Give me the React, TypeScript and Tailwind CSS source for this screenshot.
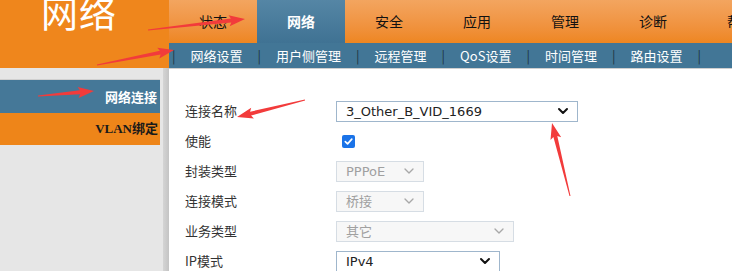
import { ChevronDown } from 'lucide-react';

const cjk = "font-['Noto_Sans_CJK_SC',sans-serif]";

const tabs = ['状态', '网络', '安全', '应用', '管理', '诊断', '帮助'];
const subs = ['网络设置', '用户侧管理', '远程管理', 'QoS设置', '时间管理', '路由设置'];

function arrowPoints(x1: number, y1: number, x2: number, y2: number) {
  const dx = x2 - x1;
  const dy = y2 - y1;
  const len = Math.hypot(dx, dy);
  const ux = dx / len;
  const uy = dy / len;
  const nx = -uy;
  const ny = ux;
  const hl = 14;
  const bx = x2 - ux * hl;
  const by = y2 - uy * hl;
  const p = (x: number, y: number) => `${x.toFixed(1)},${y.toFixed(1)}`;
  return [
    p(x1 + nx * 0.5, y1 + ny * 0.5),
    p(bx + nx * 2, by + ny * 2),
    p(bx + nx * 5.5 - ux * 2, by + ny * 5.5 - uy * 2),
    p(x2, y2),
    p(bx - nx * 5.5 - ux * 2, by - ny * 5.5 - uy * 2),
    p(bx - nx * 2, by - ny * 2),
    p(x1 - nx * 0.5, y1 - ny * 0.5),
  ].join(' ');
}

const arrows: [number, number, number, number][] = [
  [148, 30, 245, 19],
  [97, 65, 174, 50],
  [38, 96, 94, 91],
  [305, 100, 237, 117],
  [570, 196, 552, 123],
];

function Select({ value, width, disabled, strong }: { value: string; width: string; disabled?: boolean; strong?: boolean }) {
  return (
    <div
      className={`flex h-[21px] items-center justify-between border pl-[9px] pr-[6px] ${width} ${
        disabled ? 'border-[#d6dde4] bg-[#f7f7f7] text-[#a0a0a0]' : 'border-[#9fb6cc] bg-white text-[#222]'
      }`}
    >
      <span className={`text-[13px] leading-none font-['DejaVu_Sans','Noto_Sans_CJK_SC',sans-serif]`}>{value}</span>
      <ChevronDown className={`h-4 w-4 ${disabled ? 'text-[#a8a8a8]' : 'text-[#111]'}`} strokeWidth={strong ? 3 : 2} />
    </div>
  );
}

function Row({ label, children }: { label: string; children: React.ReactNode }) {
  return (
    <div className="flex h-[30px] items-center">
      <div className={`w-[151px] text-[13px] text-[#333] ${cjk}`}>{label}</div>
      {children}
    </div>
  );
}

export default function App() {
  return (
    <div className={`relative h-[271px] w-[732px] overflow-hidden bg-white ${cjk}`}>
      <div className="flex h-[68px]">
        <div className="w-[169px] shrink-0 overflow-hidden bg-[#ef861c]">
          <div className="-mt-[12px] pl-[41px] text-[37px] leading-[48px] tracking-[1px] text-white">网络</div>
        </div>
        <div className="flex flex-1 flex-col">
          <div className="flex h-[43px] bg-gradient-to-b from-[#f3a55f] to-[#ee8620]">
            {tabs.map((t, i) => (
              <div
                key={t}
                className={`flex w-[88px] shrink-0 items-center justify-center text-[14px] ${
                  i === 1
                    ? 'bg-gradient-to-b from-[#5586a5] to-[#3f7293] font-bold text-white'
                    : 'text-[#111]'
                }`}
              >
                {t}
              </div>
            ))}
          </div>
          <div className="flex h-[25px] items-center bg-[#427696] pl-[3px] text-[13px] text-white">
            <span className="text-[#1d3443]">|</span>
            {subs.map((s) => (
              <div key={s} className="flex items-center">
                <span className="px-[15px]">{s}</span>
                <span className="text-[#1d3443]">|</span>
              </div>
            ))}
          </div>
        </div>
      </div>
      <div className="flex h-[203px]">
        <div className="flex w-[163px] shrink-0 flex-col bg-[#e6e6e6] pt-[11px]">
          <div className="flex h-[34px] w-[160px] items-center justify-end border-t border-[#d0d0d0] bg-[#457898] pr-[3px] text-[13px] font-bold text-white">
            网络连接
          </div>
          <div className="flex h-[32px] w-[160px] items-center justify-end bg-[#ee8519] pr-[2px] text-[13px] font-bold text-[#1a1a1a] font-['Liberation_Serif','Noto_Sans_CJK_SC',serif]">
            VLAN绑定
          </div>
        </div>
        <div className="w-[6px] shrink-0 bg-gradient-to-r from-[#d4d4d4] to-[#c4c4c4]" />
        <div className="flex flex-1 flex-col bg-[#e6e6e6]">
          <div className="h-[10px] border-b border-[#cfcfcf]" />
          <div className="flex-1 bg-white pl-[16px] pt-[27px]">
            <Row label="连接名称">
              <Select value="3_Other_B_VID_1669" width="w-[242px]" strong />
            </Row>
            <Row label="使能">
              <div className="ml-[6px] flex h-[13px] w-[13px] items-center justify-center rounded-[2px] bg-[#1a73e8]">
                <svg viewBox="0 0 12 12" className="h-[11px] w-[11px]">
                  <path d="M2.5 6.2 5 8.6 9.6 3.4" fill="none" stroke="white" strokeWidth="1.8" strokeLinecap="round" strokeLinejoin="round" />
                </svg>
              </div>
            </Row>
            <Row label="封装类型">
              <Select value="PPPoE" width="w-[88px]" disabled />
            </Row>
            <Row label="连接模式">
              <Select value="桥接" width="w-[88px]" disabled />
            </Row>
            <Row label="业务类型">
              <Select value="其它" width="w-[178px]" disabled />
            </Row>
            <Row label="IP模式">
              <Select value="IPv4" width="w-[164px]" strong />
            </Row>
          </div>
        </div>
      </div>
      <svg className="pointer-events-none absolute left-0 top-0" width="732" height="271">
        {arrows.map((a, i) => (
          <polygon key={i} points={arrowPoints(...a)} fill="#f23b3b" />
        ))}
      </svg>
    </div>
  );
}
